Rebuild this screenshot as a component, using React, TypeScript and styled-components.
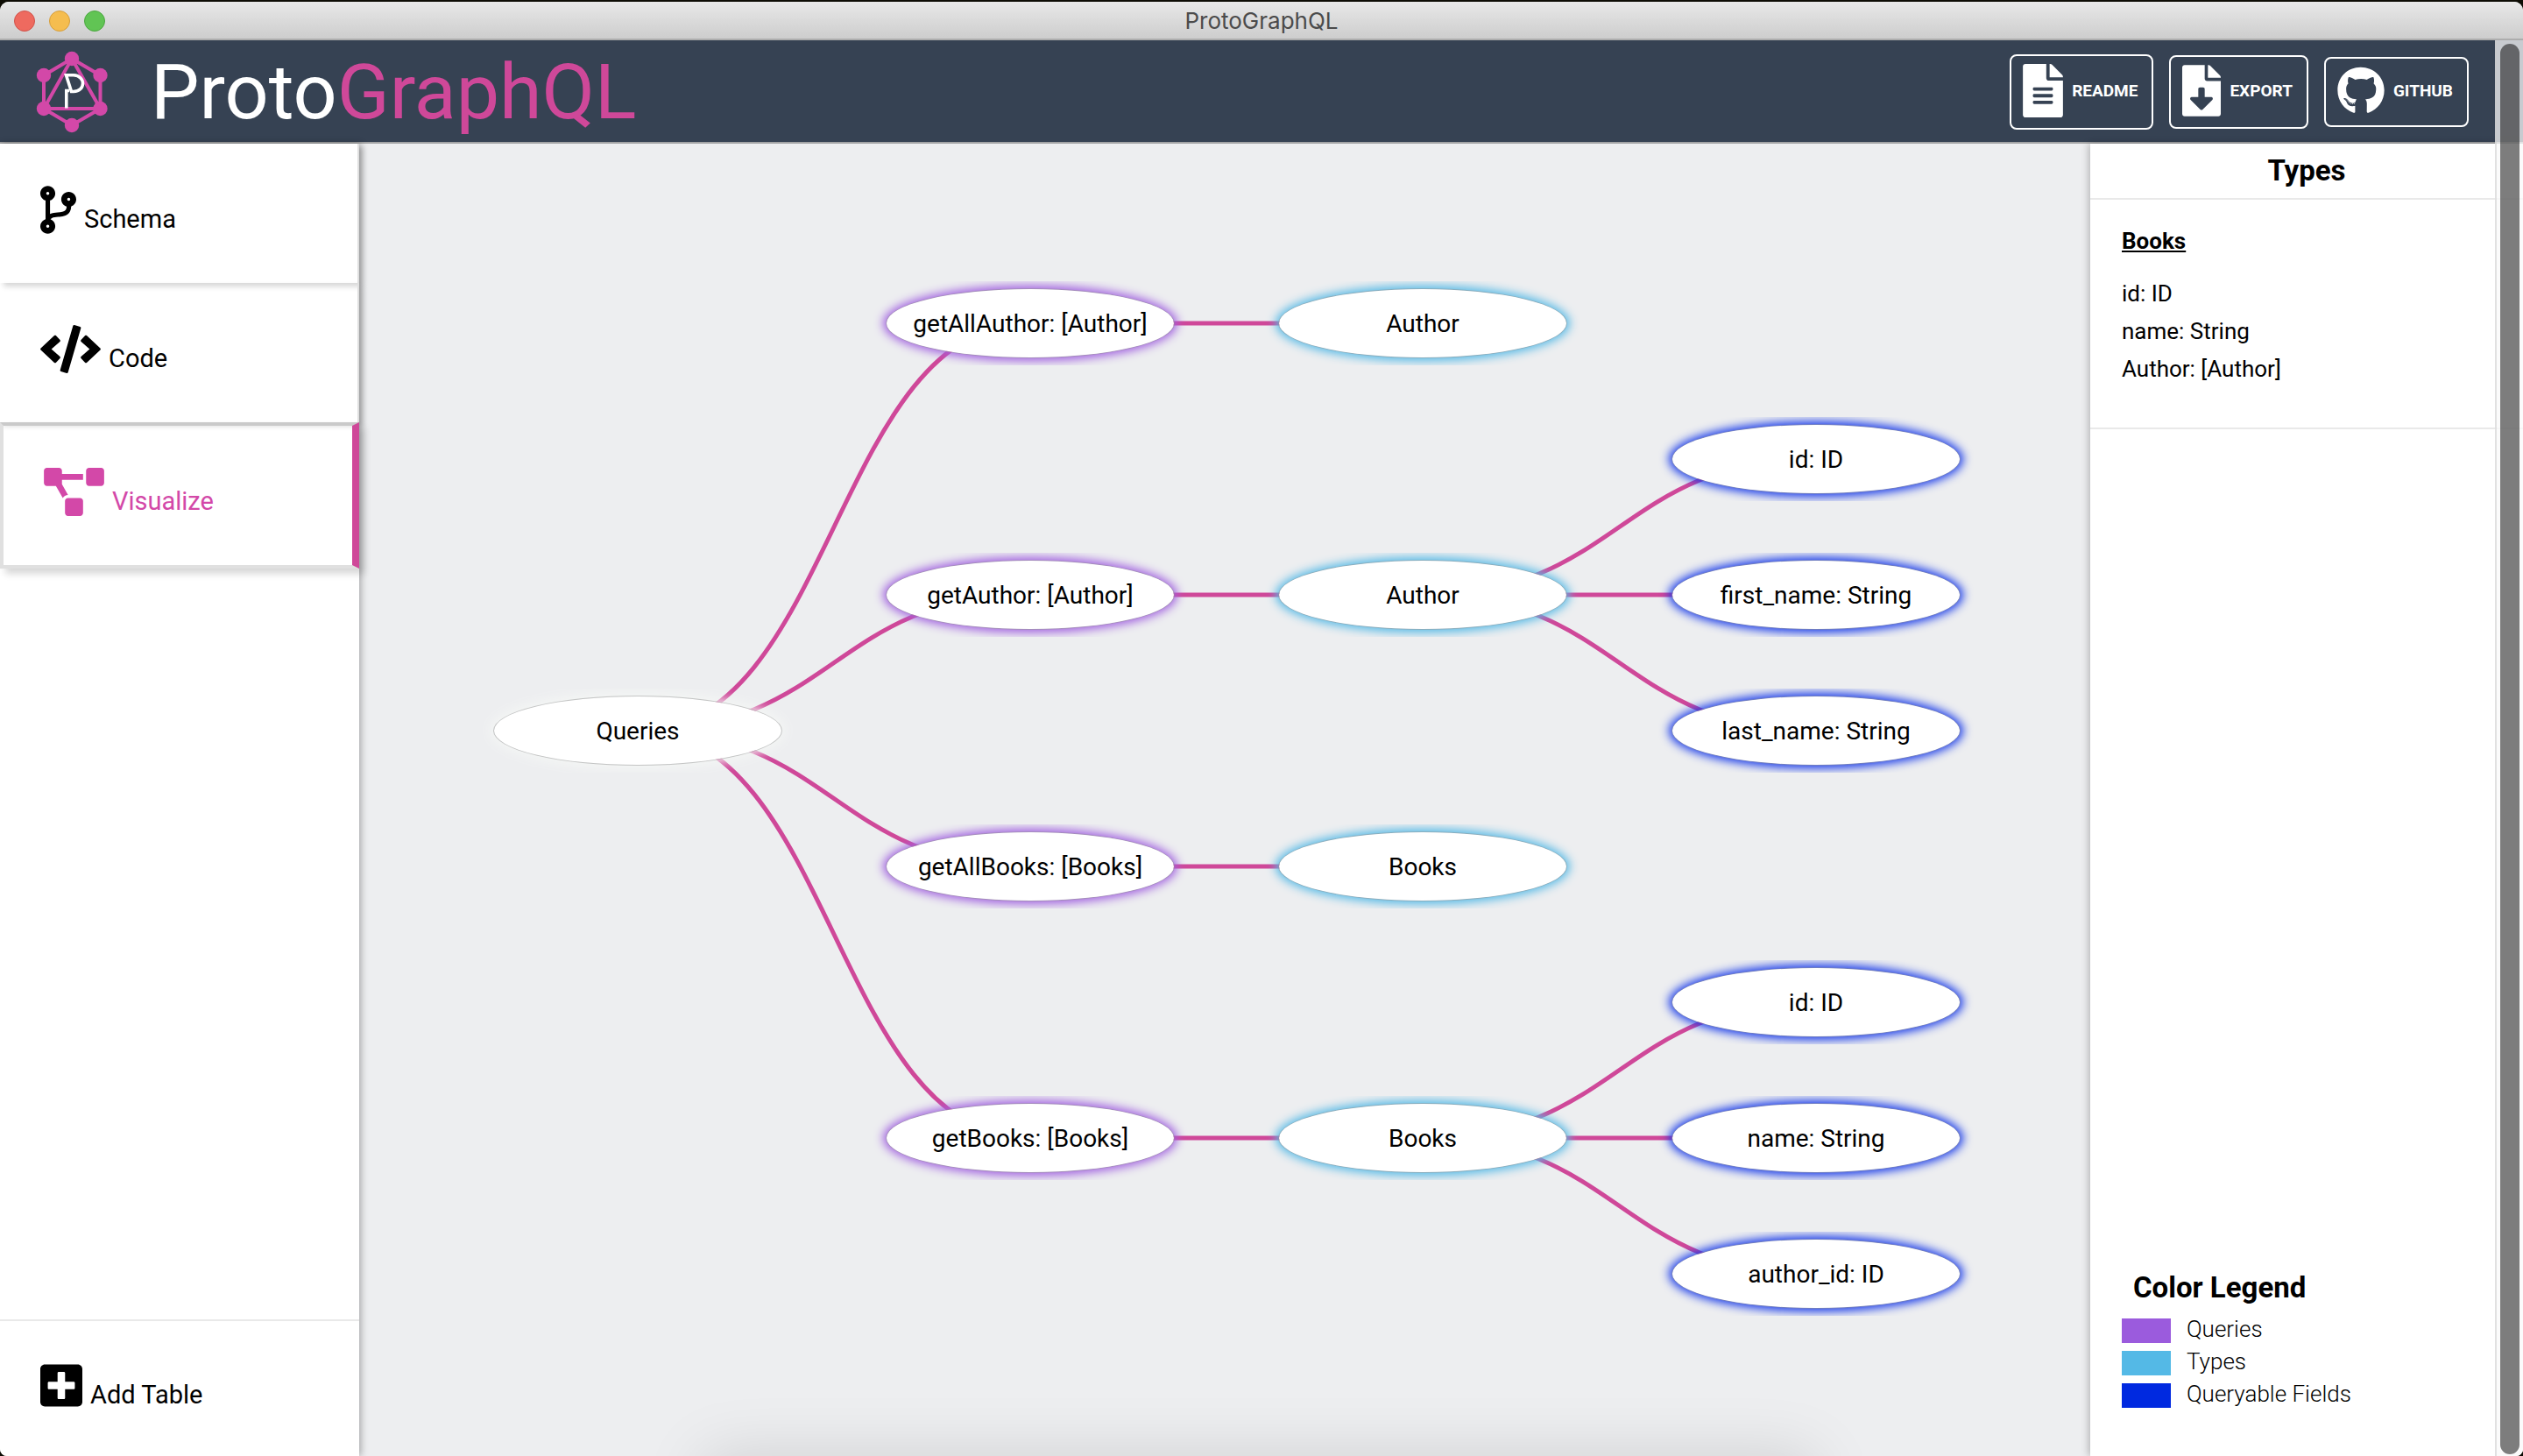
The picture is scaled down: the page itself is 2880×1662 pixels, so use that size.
import React from "react";
import styled, { createGlobalStyle, css } from "styled-components";
import {
  FaCode,
  FaCodeBranch,
  FaFileAlt,
  FaFileDownload,
  FaGithub,
  FaPlusSquare,
  FaProjectDiagram,
} from "react-icons/fa";

const colors = {
  navy: "#364253",
  pink: "#cf4899",
  iconPink: "#d348a8",
  canvas: "#edeef0",
  line: "#e9e9e9",
  queries: "#9b5bdd",
  types: "#54b9e6",
  fields: "#0029e0",
};

const GlobalStyle = createGlobalStyle`
  *, *::before, *::after { box-sizing: border-box; }
  body {
    margin: 0;
    background: #0e0d05;
    color: #000;
    font-family: Roboto, "Liberation Sans", sans-serif;
  }
  button { font: inherit; color: inherit; cursor: pointer; }
  h1, h2, h3, p, ul { margin: 0; padding: 0; }
  ul { list-style: none; }
`;

const Desktop = styled.div`
  display: flex;
  min-height: 100vh;
  padding-top: 2px;
`;

const Window = styled.div`
  position: relative;
  flex: 1;
  display: flex;
  flex-direction: column;
  overflow: hidden;
  background: #fff;
  border-radius: 10px 10px 8px 8px;
`;

/* ---------- title bar ---------- */

const TitleBar = styled.div`
  display: grid;
  grid-template-columns: 1fr auto 1fr;
  align-items: center;
  height: 44px;
  padding: 2px 16px 0;
  background: linear-gradient(#e8e8e8, #cdcdcd);
  border-bottom: 2px solid #adadad;
`;

const Lights = styled.div`
  display: flex;
  gap: 16px;
`;

const Light = styled.button<{ $fill: string; $edge: string }>`
  width: 24px;
  height: 24px;
  padding: 0;
  border: 1px solid ${(p) => p.$edge};
  border-radius: 50%;
  background: ${(p) => p.$fill};
`;

const WindowTitle = styled.span`
  color: #4b4b4b;
  font: 400 26px/32px Inter, "Liberation Sans", sans-serif;
`;

/* ---------- header ---------- */

const Header = styled.header`
  display: flex;
  align-items: center;
  height: 118px;
  padding: 2px 62px 0 41px;
  background: ${colors.navy};
  border-bottom: 2px solid #a3a4a5;
`;

const Logo = styled.svg`
  width: 82px;
  height: 94px;
  margin-right: 49px;
`;

const Brand = styled.h1`
  flex: 1;
  color: #fff;
  font-size: 88px;
  font-weight: 400;
  line-height: 104px;
`;

const BrandAccent = styled.span`
  color: ${colors.pink};
`;

const Actions = styled.div`
  display: flex;
  align-items: center;
  gap: 18px;
`;

interface IconSize {
  $iconWidth: number;
  $iconHeight: number;
}

const iconSize = css<IconSize>`
  svg {
    flex: none;
    width: ${(p) => p.$iconWidth}px;
    height: ${(p) => p.$iconHeight}px;
  }
`;

const actionStyle = css<IconSize>`
  display: flex;
  align-items: center;
  gap: 10px;
  padding: 9px 16px 12px 13px;
  border: 2px solid #fff;
  border-radius: 8px;
  background: none;
  text-decoration: none;
  && {
    color: #fff;
    font-size: 19px;
    font-weight: 700;
    line-height: 24px;
  }
  ${iconSize}
`;

const ActionButton = styled.button<IconSize>`
  ${actionStyle}
`;

const ActionLink = styled.a<IconSize>`
  ${actionStyle}
`;

/* ---------- body ---------- */

const Body = styled.div`
  flex: 1;
  display: flex;
`;

const Sidebar = styled.nav`
  position: relative;
  z-index: 1;
  display: flex;
  flex-direction: column;
  flex: none;
  width: 410px;
  background: #fff;
  box-shadow: 2px 0 8px rgba(0, 0, 0, 0.3);
`;

const NavItem = styled.button<IconSize & { $active?: boolean }>`
  display: flex;
  align-items: flex-end;
  gap: 9px;
  padding: 48px 46px 56px;
  border: 0 solid #e0e0e0;
  border-right-width: 2px;
  background: none;
  box-shadow: 4px 4px 6px rgba(0, 0, 0, 0.16);
  && {
    font-size: 29px;
    line-height: 34px;
  }
  ${iconSize}
  ${(p) =>
    p.$active &&
    css`
      && { color: ${colors.iconPink}; }
      border-width: 4px 8px 4px 4px;
      border-color: #cacaca ${colors.pink} #e0e0e0 #e0e0e0;
      box-shadow: 6px 6px 8px rgba(0, 0, 0, 0.16);
    `}
`;

const AddTable = styled(NavItem)`
  margin-top: auto;
  padding: 46px 46px 53px;
  border-width: 2px 0 0;
  border-color: ${colors.line};
  box-shadow: none;
`;

/* ---------- graph ---------- */

const Canvas = styled.main`
  position: relative;
  flex: 1;
  overflow: hidden;
  background: ${colors.canvas};
  &::after {
    content: "";
    position: absolute;
    top: 100%;
    left: 20%;
    right: 16%;
    height: 80px;
    box-shadow: 0 0 72px rgba(0, 0, 0, 0.13);
  }
`;

const Edges = styled.svg`
  display: block;
  width: 100%;
  height: 100%;
  fill: none;
  stroke: ${colors.pink};
  stroke-width: 5px;
`;

type Kind = "root" | "query" | "type" | "field";

const glow: Record<Kind, string> = {
  root: "0 0 14px 3px #f5f7f5",
  query: "0 0 11px 3px #a05fe0",
  type: "0 0 11px 3px #54b9e6",
  field: "0 0 11px 3px #1437ea",
};

const Node = styled.div<{ $x: number; $y: number; $kind: Kind }>`
  position: absolute;
  left: ${(p) => p.$x}px;
  top: ${(p) => p.$y}px;
  display: flex;
  align-items: center;
  justify-content: center;
  width: 330px;
  height: 80px;
  margin: -40px 0 0 -165px;
  padding-top: 2px;
  border: 1px solid rgba(150, 150, 150, 0.5);
  border-radius: 50%;
  background: #fff;
  background-clip: padding-box;
  box-shadow: ${(p) => glow[p.$kind]};
  clip-path: inset(-8px -33px);
  font-size: 28px;
  line-height: 36px;
  white-space: nowrap;
`;

/* ---------- types panel ---------- */

const Panel = styled.aside`
  position: relative;
  z-index: 1;
  display: flex;
  flex-direction: column;
  flex: none;
  width: 494px;
  background: #fff;
  box-shadow: -2px 0 8px rgba(0, 0, 0, 0.24);
`;

const PanelTitle = styled.h2`
  padding: 12px 0;
  border-bottom: 2px solid ${colors.line};
  font-size: 33px;
  font-weight: 700;
  line-height: 38px;
  text-align: center;
`;

const TypeCard = styled.section`
  padding: 27px 36px 45px;
  border-bottom: 2px solid ${colors.line};
`;

const TypeName = styled.h3`
  margin-bottom: 19px;
  font-size: 26px;
  font-weight: 700;
  line-height: 40px;
  text-decoration: underline;
`;

const TypeField = styled.li`
  font-size: 26px;
  line-height: 43px;
`;

const Legend = styled.section`
  margin-top: auto;
  padding: 0 36px 52px;
`;

const LegendTitle = styled.h3`
  padding: 0 0 10px 13px;
  font-size: 33px;
  font-weight: 700;
  line-height: 38px;
`;

const LegendRow = styled.li`
  display: flex;
  gap: 18px;
  font-size: 26px;
  font-weight: 300;
  line-height: 37px;
`;

const Swatch = styled.span<{ $color: string }>`
  width: 56px;
  height: 28px;
  margin-top: 6px;
  background: ${(p) => p.$color};
`;

/* ---------- scrollbar ---------- */

const ScrollTrack = styled.div`
  position: absolute;
  z-index: 2;
  top: 44px;
  right: 0;
  bottom: 0;
  width: 32px;
  padding: 4px 4px 2px;
  background: rgba(250, 250, 250, 0.75);
  border-left: 2px solid rgba(200, 200, 200, 0.5);
`;

const ScrollThumb = styled.div`
  width: 22px;
  height: 100%;
  border-radius: 11px;
  background: rgba(0, 0, 0, 0.5);
`;

/* ---------- data ---------- */

const COLUMNS = [318, 766, 1214, 1663];
const rowY = (row: number) => 205 + row * 155;

interface TreeNode {
  id: string;
  label: string;
  col: number;
  row: number;
  kind: Kind;
  parent?: string;
}

const nodes: TreeNode[] = [
  { id: "root", label: "Queries", col: 0, row: 3, kind: "root" },
  { id: "q1", label: "getAllAuthor: [Author]", col: 1, row: 0, kind: "query", parent: "root" },
  { id: "q2", label: "getAuthor: [Author]", col: 1, row: 2, kind: "query", parent: "root" },
  { id: "q3", label: "getAllBooks: [Books]", col: 1, row: 4, kind: "query", parent: "root" },
  { id: "q4", label: "getBooks: [Books]", col: 1, row: 6, kind: "query", parent: "root" },
  { id: "t1", label: "Author", col: 2, row: 0, kind: "type", parent: "q1" },
  { id: "t2", label: "Author", col: 2, row: 2, kind: "type", parent: "q2" },
  { id: "t3", label: "Books", col: 2, row: 4, kind: "type", parent: "q3" },
  { id: "t4", label: "Books", col: 2, row: 6, kind: "type", parent: "q4" },
  { id: "f1", label: "id: ID", col: 3, row: 1, kind: "field", parent: "t2" },
  { id: "f2", label: "first_name: String", col: 3, row: 2, kind: "field", parent: "t2" },
  { id: "f3", label: "last_name: String", col: 3, row: 3, kind: "field", parent: "t2" },
  { id: "f4", label: "id: ID", col: 3, row: 5, kind: "field", parent: "t4" },
  { id: "f5", label: "name: String", col: 3, row: 6, kind: "field", parent: "t4" },
  { id: "f6", label: "author_id: ID", col: 3, row: 7, kind: "field", parent: "t4" },
];

const linkPath = (from: TreeNode, to: TreeNode) => {
  const x1 = COLUMNS[from.col];
  const x2 = COLUMNS[to.col];
  const y1 = rowY(from.row);
  const y2 = rowY(to.row);
  const mid = (x1 + x2) / 2;
  return `M${x1} ${y1}C${mid} ${y1} ${mid} ${y2} ${x2} ${y2}`;
};

const legend = [
  { label: "Queries", color: colors.queries },
  { label: "Types", color: colors.types },
  { label: "Queryable Fields", color: colors.fields },
];

const LogoMark = () => (
  <Logo viewBox="0 0 82 94" aria-hidden="true">
    <g fill="none" stroke={colors.iconPink} strokeWidth="4">
      <path d="M41 9 73.500 28V66L41 85 9 66V28Z" />
      <path d="M41 9 73.500 66H9Z" />
    </g>
    <g fill={colors.iconPink}>
      {[[41, 9], [9, 28], [73.5, 28], [9, 66], [73.5, 66], [41, 85]].map(([cx, cy]) => (
        <circle key={`${cx}-${cy}`} cx={cx} cy={cy} r="8.2" />
      ))}
    </g>
    <g fill="none" stroke="#fff" strokeWidth="3.6">
      <path d="M34.500 27.800H43C57 28.500 57 46 43 46.500H40.500Z" />
      <path d="M38 45.500H34.800V65.500" />
    </g>
  </Logo>
);

export default function App() {
  return (
    <Desktop>
      <GlobalStyle />
      <Window>
        <TitleBar>
          <Lights>
            <Light aria-label="Close" $fill="#ee6a5f" $edge="#d0524a" />
            <Light aria-label="Minimize" $fill="#f5bd4f" $edge="#d69e3c" />
            <Light aria-label="Zoom" $fill="#61c454" $edge="#4ba73f" />
          </Lights>
          <WindowTitle>ProtoGraphQL</WindowTitle>
        </TitleBar>

        <Header>
          <LogoMark />
          <Brand>
            Proto<BrandAccent>GraphQL</BrandAccent>
          </Brand>
          <Actions>
            <ActionButton type="button" $iconWidth={46} $iconHeight={61}>
              <FaFileAlt />
              README
            </ActionButton>
            <ActionButton type="button" $iconWidth={44} $iconHeight={59}>
              <FaFileDownload />
              EXPORT
            </ActionButton>
            <ActionLink href="#github" $iconWidth={54} $iconHeight={55}>
              <FaGithub />
              GITHUB
            </ActionLink>
          </Actions>
        </Header>

        <Body>
          <Sidebar>
            <NavItem type="button" $iconWidth={41} $iconHeight={55}>
              <FaCodeBranch />
              Schema
            </NavItem>
            <NavItem type="button" $iconWidth={69} $iconHeight={55}>
              <FaCode />
              Code
            </NavItem>
            <NavItem type="button" $iconWidth={69} $iconHeight={55} $active aria-current="page">
              <FaProjectDiagram />
              Visualize
            </NavItem>
            <AddTable type="button" $iconWidth={48} $iconHeight={55}>
              <FaPlusSquare />
              Add Table
            </AddTable>
          </Sidebar>

          <Canvas>
            <Edges aria-hidden="true">
              {nodes.map((node) => {
                const parent = nodes.find((n) => n.id === node.parent);
                return parent ? <path key={node.id} d={linkPath(parent, node)} /> : null;
              })}
            </Edges>
            {nodes.map((node) => (
              <Node key={node.id} $x={COLUMNS[node.col]} $y={rowY(node.row)} $kind={node.kind}>
                {node.label}
              </Node>
            ))}
          </Canvas>

          <Panel>
            <PanelTitle>Types</PanelTitle>
            <TypeCard>
              <TypeName>Books</TypeName>
              <ul>
                <TypeField>id: ID</TypeField>
                <TypeField>name: String</TypeField>
                <TypeField>Author: [Author]</TypeField>
              </ul>
            </TypeCard>
            <Legend>
              <LegendTitle>Color Legend</LegendTitle>
              <ul>
                {legend.map((item) => (
                  <LegendRow key={item.label}>
                    <Swatch $color={item.color} />
                    {item.label}
                  </LegendRow>
                ))}
              </ul>
            </Legend>
          </Panel>
        </Body>

        <ScrollTrack aria-hidden="true">
          <ScrollThumb />
        </ScrollTrack>
      </Window>
    </Desktop>
  );
}
